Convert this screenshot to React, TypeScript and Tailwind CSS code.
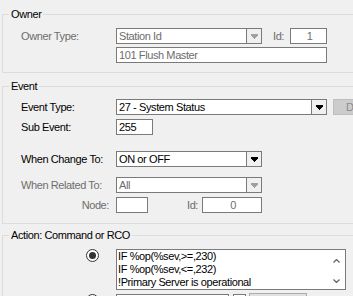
import React from 'react'

const GRAY = 'text-[#6d6d6d]'

function Arrow({ disabled }: { disabled?: boolean }) {
  const fill = disabled ? '#a0a0a0' : '#000000'
  return (
    <svg width="7" height="5" viewBox="0 0 7 5" shapeRendering="crispEdges">
      <rect x="0" y="0" width="7" height="2" fill={fill} />
      <rect x="1" y="2" width="5" height="1" fill={fill} />
      <rect x="2" y="3" width="3" height="1" fill={fill} />
      <rect x="3" y="4" width="1" height="1" fill={fill} />
    </svg>
  )
}

function Combo({ value, width, disabled }: { value: string; width: string; disabled?: boolean }) {
  return (
    <div className={`${width} h-[16px] flex border border-[#7a7a7a] bg-white`}>
      <div className={`flex-1 pl-[2px] leading-[14px] truncate ${disabled ? GRAY : 'text-black'}`}>{value}</div>
      <div className="w-[15px] border-l border-[#7a7a7a] bg-[#f0f0f0] flex items-center justify-center">
        <Arrow disabled={disabled} />
      </div>
    </div>
  )
}

function Field({ value, width, disabled, center }: { value: string; width: string; disabled?: boolean; center?: boolean }) {
  return (
    <div
      className={`${width} h-[16px] border border-[#7a7a7a] bg-white leading-[14px] pl-[2px] ${center ? 'text-center pl-0' : ''} ${
        disabled ? GRAY : 'text-black'
      }`}
    >
      {value}
    </div>
  )
}

function Label({ children, disabled, right }: { children: React.ReactNode; disabled?: boolean; right?: boolean }) {
  return (
    <div className={`w-[95px] shrink-0 ${right ? 'text-right pr-[7px]' : ''} ${disabled ? GRAY : 'text-black'}`}>
      {children}
    </div>
  )
}

function Group({ title, className, children }: { title: string; className?: string; children: React.ReactNode }) {
  return (
    <fieldset className={`w-[380px] border border-[#dcdcdc] ${className ?? ''}`}>
      <legend className="ml-[6px] px-[2px] leading-[13px] text-black">{title}</legend>
      {children}
    </fieldset>
  )
}

function Chevron({ up }: { up?: boolean }) {
  return (
    <svg width="7" height="4" viewBox="0 0 7 4">
      <path d={up ? 'M0.5 3.5 L3.5 0.5 L6.5 3.5' : 'M0.5 0.5 L3.5 3.5 L6.5 0.5'} stroke="#606060" strokeWidth="1.2" fill="none" />
    </svg>
  )
}

export default function App() {
  return (
    <div className="w-[353px] h-[296px] overflow-hidden bg-[#f0f0f0] pl-[2px] pt-[8px] font-['Liberation_Sans',Arial,sans-serif] text-[11px] tracking-[-0.4px] leading-[13px]">
      <Group title="Owner">
        <div className="pl-[18px] pt-[7px] pb-[9px]">
          <div className="flex items-center h-[16px]">
            <Label disabled>Owner Type:</Label>
            <Combo value="Station Id" width="w-[146px]" disabled />
            <div className={`ml-[11px] w-[17px] ${GRAY}`}>Id:</div>
            <Field value="1" width="w-[37px]" disabled center />
          </div>
          <div className="flex items-center h-[16px] mt-[3px]">
            <Label> </Label>
            <Field value="101 Flush Master" width="w-[211px]" disabled />
          </div>
        </div>
      </Group>

      <Group title="Event" className="mt-[7px]">
        <div className="pl-[18px] pt-[6px] pb-[10px]">
          <div className="flex items-center h-[16px]">
            <Label>Event Type:</Label>
            <Combo value="27 - System Status" width="w-[211px]" />
            <div className="ml-[6px] w-[70px] shrink-0 h-[16px] border border-[#bfbfbf] bg-[#cccccc] text-[#8a8a8a] pl-[12px] leading-[14px] whitespace-nowrap">
              Details
            </div>
          </div>
          <div className="flex items-center h-[16px] mt-[4px]">
            <Label>Sub Event:</Label>
            <Field value="255" width="w-[37px]" />
          </div>
          <div className="flex items-center h-[16px] mt-[16px]">
            <Label>When Change To:</Label>
            <Combo value="ON or OFF" width="w-[146px]" />
          </div>
          <div className="flex items-center h-[16px] mt-[10px]">
            <Label disabled>When Related To:</Label>
            <Combo value="All" width="w-[146px]" disabled />
          </div>
          <div className="flex items-center h-[16px] mt-[4px]">
            <Label disabled right>
              Node:
            </Label>
            <Field value="" width="w-[32px]" disabled />
            <div className={`ml-[39px] w-[15px] ${GRAY}`}>Id:</div>
            <Field value="0" width="w-[60px]" disabled center />
          </div>
        </div>
      </Group>

      <Group title="Action: Command or RCO" className="mt-[5px]">
        <div className="pl-[83px] pt-[7px]">
          <div className="flex items-start">
            <div className="w-[13px] h-[13px] rounded-full border border-[#333333] bg-white flex items-center justify-center">
              <div className="w-[7px] h-[7px] rounded-full bg-[#333333]" />
            </div>
            <div className="ml-[17px] w-[230px] h-[41px] border border-[#7a7a7a] bg-white flex">
              <div className="flex-1 pl-[1px] leading-[13px] text-black whitespace-pre">
                {'IF %op(%sev,>=,230)\nIF %op(%sev,<=,232)\n!Primary Server is operational'}
              </div>
              <div className="w-[17px] flex flex-col justify-between items-center pt-[9px] pb-[6px]">
                <Chevron up />
                <Chevron />
              </div>
            </div>
          </div>
          <div className="flex items-start mt-[4px]">
            <div className="w-[13px] h-[13px] rounded-full border border-[#333333] bg-white" />
            <div className="ml-[17px] w-[113px] h-[16px] border border-[#7a7a7a] bg-white" />
            <div className="ml-[4px] w-[13px] h-[16px] border border-[#7a7a7a] bg-white" />
            <div className="ml-[3px] -mt-[1px] w-[58px] h-[20px] border border-[#adadad] bg-[#e1e1e1]" />
          </div>
        </div>
      </Group>
    </div>
  )
}
